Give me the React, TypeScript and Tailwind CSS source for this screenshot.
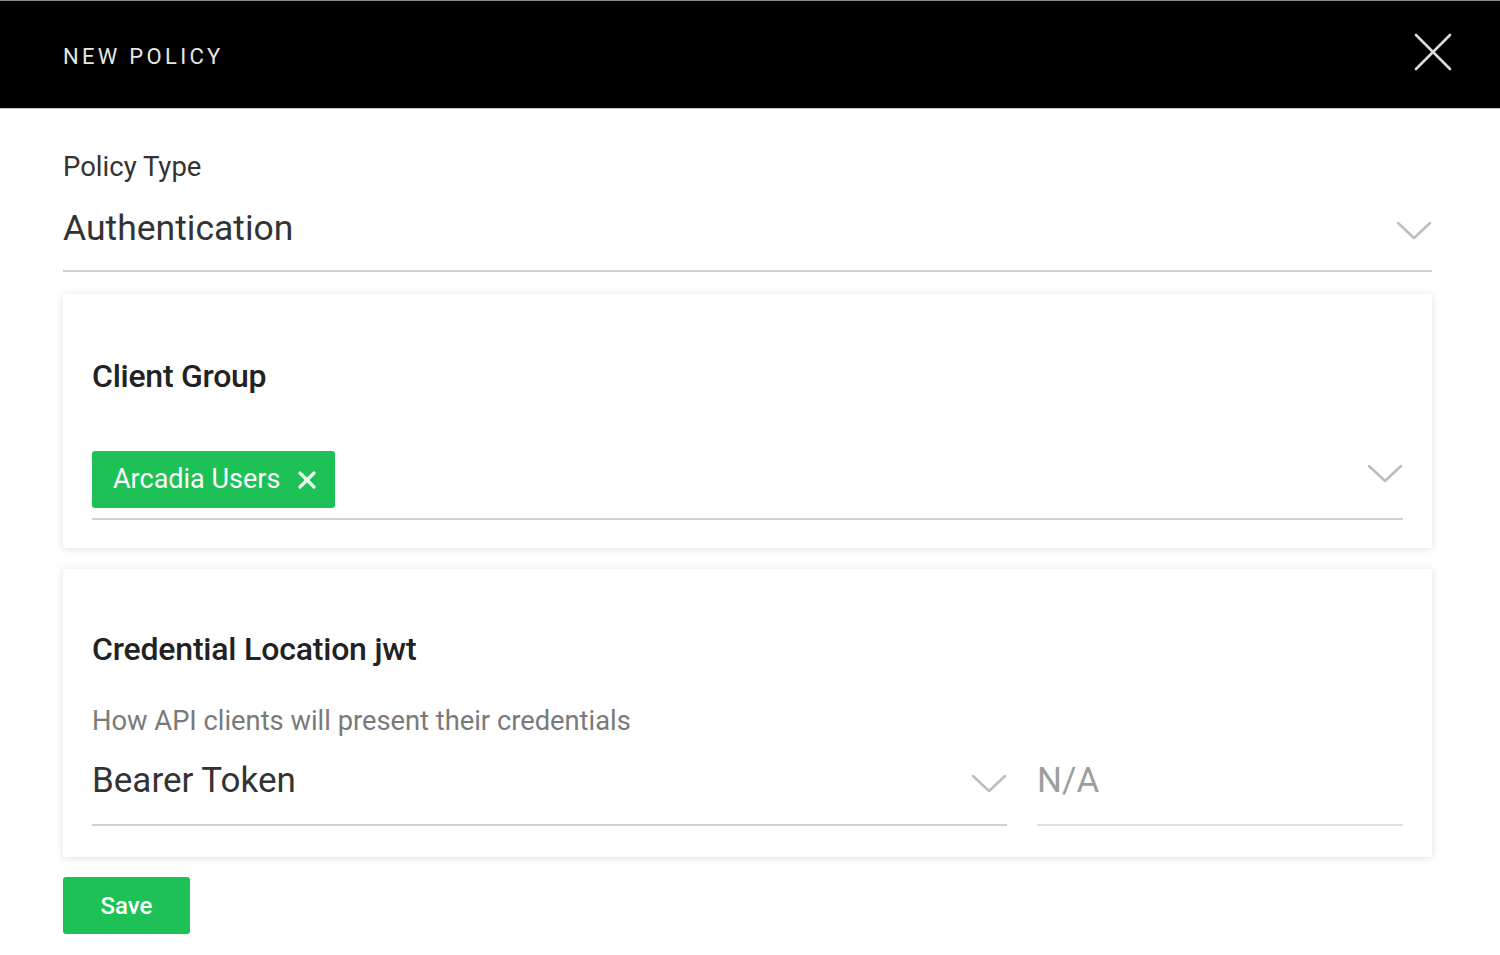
const Chevron = ({ className }: { className?: string }) => (
  <svg className={className} width="36" height="20" viewBox="0 0 36 20" fill="none">
    <polyline points="2,2 18,17 34,2" stroke="#bdbdbd" strokeWidth="2.5" strokeLinecap="round" strokeLinejoin="round" />
  </svg>
)

export default function App() {
  return (
    <div className="min-h-screen bg-white font-['Roboto',sans-serif]">
      <header className="h-[109px] bg-black border-t border-[#8a8a8a] border-b border-b-[#c4c4c4] flex items-center justify-between pl-[63px] pr-[48px]">
        <span className="text-[22px] tracking-[0.15em] text-[#e6e6e6] pt-[3px]">NEW POLICY</span>
        <svg width="38" height="38" viewBox="0 0 38 38" className="-mt-[6px]">
          <line x1="2" y1="2" x2="36" y2="36" stroke="#dcdcdc" strokeWidth="2.6" strokeLinecap="round" />
          <line x1="36" y1="2" x2="2" y2="36" stroke="#dcdcdc" strokeWidth="2.6" strokeLinecap="round" />
        </svg>
      </header>

      <main className="px-[63px] w-[1495px]">
        <div className="pt-[42px]">
          <div className="text-[27.5px] leading-[32px] text-[#333]">Policy Type</div>
          <div className="mt-[23px] flex items-center justify-between border-b-2 border-[#d0d0d0] pb-[20px]">
            <span className="text-[35.5px] leading-[44px] text-[#333]">Authentication</span>
            <Chevron className="mt-[6px]" />
          </div>
        </div>

        <section className="mt-[22px] bg-white rounded-[2px] shadow-[0_1px_8px_rgba(0,0,0,0.13)] px-[29px] pt-[62px] pb-[28px]">
          <h2 className="text-[32px] leading-[40px] font-medium text-[#222] tracking-[-0.008em]">Client Group</h2>
          <div className="mt-[55px] flex items-center justify-between border-b-2 border-[#d0d0d0] pb-[10px]">
            <span className="h-[57px] w-[243px] bg-[#1ec155] rounded-[3px] flex items-center pl-[21px] gap-[18px] text-white">
              <span className="text-[27px]">Arcadia Users</span>
              <svg width="18" height="18" viewBox="0 0 18 18">
                <line x1="2" y1="2" x2="16" y2="16" stroke="#e8fbee" strokeWidth="3.2" strokeLinecap="round" />
                <line x1="16" y1="2" x2="2" y2="16" stroke="#e8fbee" strokeWidth="3.2" strokeLinecap="round" />
              </svg>
            </span>
            <Chevron className="mt-[-12px]" />
          </div>
        </section>

        <section className="mt-[21px] bg-white rounded-[2px] shadow-[0_1px_8px_rgba(0,0,0,0.13)] px-[29px] pt-[60px] pb-[31px]">
          <h2 className="text-[32px] leading-[40px] font-medium text-[#222] tracking-[-0.006em]">Credential Location jwt</h2>
          <p className="mt-[36px] text-[27.3px] leading-[32px] text-[#7a7a7a]">How API clients will present their credentials</p>
          <div className="mt-[22px] flex gap-[30px]">
            <div className="w-[915px] flex items-center justify-between border-b-2 border-[#d0d0d0] pb-[21px]">
              <span className="text-[35px] leading-[44px] text-[#333]">Bearer Token</span>
              <Chevron className="mt-[6px]" />
            </div>
            <div className="flex-1 border-b-2 border-[#e0e0e0] pb-[19px]">
              <span className="text-[35px] leading-[44px] text-[#9e9e9e]">N/A</span>
            </div>
          </div>
        </section>

        <button className="mt-[20px] h-[57px] w-[127px] bg-[#1ec155] rounded-[3px] text-white text-[24px] font-medium">Save</button>
      </main>
    </div>
  )
}
